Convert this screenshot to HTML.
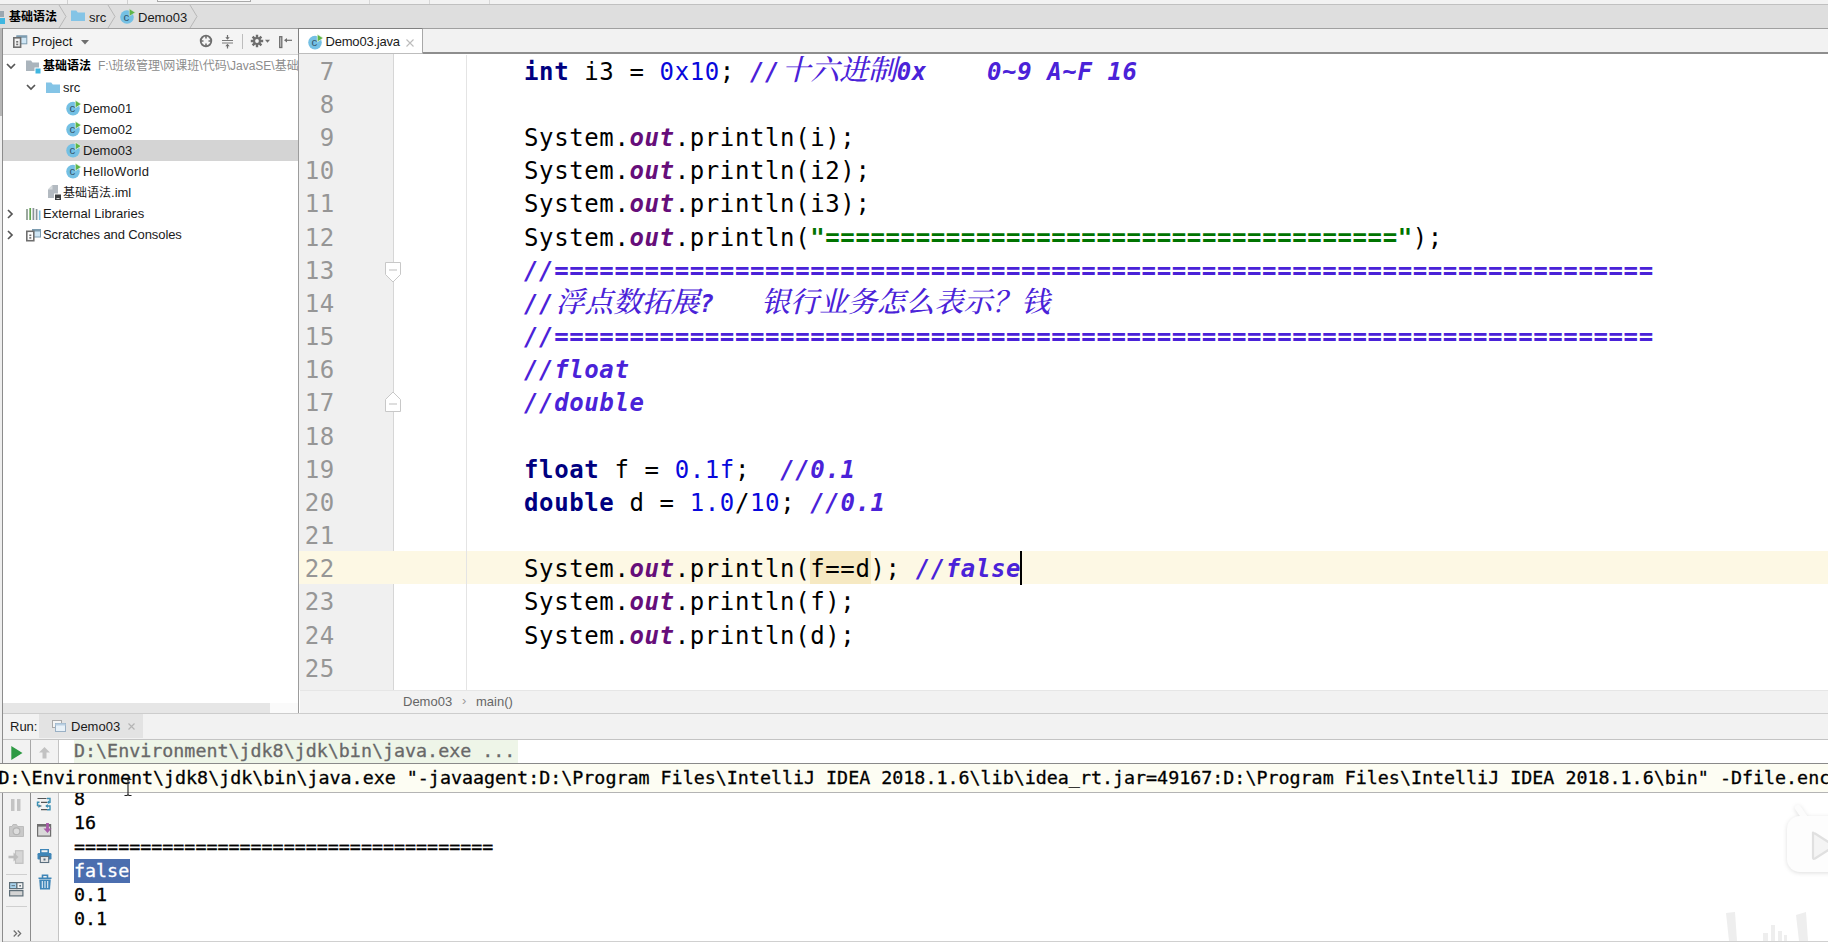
<!DOCTYPE html><html><head><meta charset="utf-8"><title>Demo03</title><style>html,body{margin:0;padding:0;}
body{width:1828px;height:942px;overflow:hidden;position:relative;background:#fff;font-family:"Liberation Sans","Noto Sans CJK SC",sans-serif;font-size:13px;color:#1a1a1a;}
div,span{box-sizing:border-box;}
.abs{position:absolute;}
#topstrip{position:absolute;left:0;top:0;width:1828px;height:4px;background:#f2f2f2;}
#navbar{position:absolute;left:0;top:4px;width:1828px;height:25px;background:#dedede;border-top:1px solid #c0c0c0;border-bottom:1px solid #a0a0a0;}
#leftedge{position:absolute;left:0;top:28px;width:3px;height:914px;background:#eeeeee;border-right:1px solid #8c8c8c;}
#leftedge div{position:absolute;left:0;top:0;width:2px;height:88px;background:#b6b6b6;}
#projhead{position:absolute;left:3px;top:29px;width:295px;height:26px;background:#f4f4f4;border-bottom:1px solid #d4d4d4;}
#tree{position:absolute;left:3px;top:55px;width:295px;height:648px;background:#fff;overflow:hidden;}
#treescroll{position:absolute;left:3px;top:703px;width:295px;height:10px;background:#fafafa;}
#treescroll div{position:absolute;left:0;top:0;width:267px;height:10px;background:#e6e6e6;}
#vdiv{position:absolute;left:298px;top:29px;width:1px;height:684px;background:#9c9c9c;}
#tabs{position:absolute;left:298px;top:29px;width:1530px;height:25px;background:#f2f2f2;border-bottom:2px solid #8e8e8e;}
#tab1{position:absolute;left:0;top:-1px;width:125px;height:26px;background:#fff;border:1px solid #808080;border-bottom:1px solid #bdbdbd;border-right-color:#a8a8a8;}
.row{position:absolute;left:0;width:295px;height:21px;line-height:21px;white-space:nowrap;}
.row.sel{background:#d4d4d4;}
.row span.t{position:absolute;top:0;}
.cjkb{font-weight:bold;font-size:12px;}
#editor{position:absolute;left:299px;top:54px;width:1529px;height:636px;background:#fff;overflow:hidden;}
#gutter{position:absolute;left:0;top:0;width:94.5px;height:636px;background:#f0f0f0;border-right:1.5px solid #d6d6d6;}
#guide{position:absolute;left:167px;top:1px;width:1px;height:635px;background:#e4e4e4;}
#curline{position:absolute;left:0;width:1529px;height:33px;background:#fdf8e4;}
.ln,.cl{position:absolute;height:33.17px;line-height:33.17px;white-space:pre;font-family:"DejaVu Sans Mono","Liberation Mono","Noto Serif CJK SC",monospace;font-size:24px;letter-spacing:0.614px;}
.ln{left:0;width:35.8px;text-align:right;color:#969696;margin-top:-51.7px;}
.cl{left:225px;color:#000;margin-top:-51.7px;}
#curline,#hl,#caret{margin-top:-53.500px;}
#hl{position:absolute;left:511px;width:60.500px;height:33px;background:#f6e9c2;}
#caret{position:absolute;left:721.300px;width:2px;height:33.500px;background:#000;}
.k{color:#000080;font-weight:bold;}
.n{color:#0808dc;}
.s{color:#660e7a;font-weight:bold;font-style:italic;}
.g{color:#007400;font-weight:bold;}
.c{color:#4a22d8;font-weight:bold;font-style:italic;}
.z{font-family:"Noto Serif CJK SC",serif;font-size:28.75px;font-weight:500;line-height:10px;position:relative;top:0.5px;margin-left:1.5px;letter-spacing:0;}
.z2{margin-left:1.5px;letter-spacing:0.15px;}
.hl{background:#fcefc0;}
.caret{display:inline-block;width:2px;height:31px;background:#000;vertical-align:middle;margin-left:0px;margin-top:-3px;}
#edcrumb{position:absolute;left:300px;top:690px;width:1528px;height:23px;background:#f2f2f2;border-top:1px solid #e6e6e6;color:#666;font-size:13px;line-height:22px;}
#runhead{position:absolute;left:3px;top:713px;width:1825px;height:26px;background:#f2f2f2;border-top:1px solid #cdcdcd;}
#runtab{position:absolute;left:36px;top:0;width:104px;height:24px;background:#e3e3e3;}
#console{position:absolute;left:3px;top:739px;width:1825px;height:203px;background:#fff;}
.con{position:absolute;left:71px;height:24px;line-height:24px;white-space:pre;font-family:"DejaVu Sans Mono","Liberation Mono",monospace;font-size:18.34px;color:#000;-webkit-text-stroke:0.3px;}
#tooltip{position:absolute;left:0;top:763px;width:1828px;height:30px;background:#fdfdf3;border-top:1px solid #8a8a8a;border-bottom:1px solid #b4b4b4;white-space:pre;font-family:"DejaVu Sans Mono","Liberation Mono",monospace;font-size:18.34px;line-height:27px;color:#000;overflow:hidden;text-indent:-1.5px;-webkit-text-stroke:0.3px;}
svg{position:absolute;overflow:visible;}
</style></head><body>
<div id="topstrip">
 <div class="abs" style="left:67px;top:0;width:1px;height:4px;background:#d0d0d0"></div>
 <div class="abs" style="left:127px;top:0;width:1px;height:4px;background:#d0d0d0"></div>
 <div class="abs" style="left:157px;top:0;width:94px;height:2px;background:#fafafa;border:1px solid #a9a9a9;border-top:none"></div>
 <div class="abs" style="left:369px;top:0;width:1px;height:4px;background:#d8d8d8"></div>
 <div class="abs" style="left:429px;top:0;width:1px;height:4px;background:#d8d8d8"></div>
 <div class="abs" style="left:489px;top:0;width:1px;height:4px;background:#d8d8d8"></div>
</div>
<div id="navbar">
 <svg style="left:0;top:6px" width="6" height="14"><rect x="0" y="0" width="4" height="6" fill="#9aa7b0"/><rect x="0" y="7" width="5" height="6" fill="#40b6e0"/></svg>
 <span class="abs cjkb" style="left:9px;top:0;line-height:25px;color:#000">基础语法</span>
 <svg style="left:58px;top:0" width="12" height="23"><path d="M1 0 L8 11.5 L1 23" fill="none" stroke="#b8b8b8" stroke-width="1"/></svg>
 <svg style="left:71px;top:5px" width="15" height="12"><path d="M0 0.5h5.2l1.6 2H14V11H0z" fill="#84c4e6"/></svg>
 <span class="abs" style="left:89px;top:0;line-height:25px;color:#1a1a1a">src</span>
 <svg style="left:107px;top:0" width="12" height="23"><path d="M1 0 L8 11.5 L1 23" fill="none" stroke="#b8b8b8" stroke-width="1"/></svg>
 <svg style="left:120px;top:4px" width="16" height="16"><circle cx="7" cy="8" r="6.8" fill="#74c0e4"/><path d="M9.300 -0.300 L15.300 3.500 L9.300 7.300z" fill="#5fb548" stroke="#dedede" stroke-width="0.600"/><text x="3.500" y="11.800" font-family="Liberation Sans,sans-serif" font-size="11.500" fill="#36566b">c</text></svg>
 <span class="abs" style="left:138px;top:0;line-height:25px;color:#1a1a1a">Demo03</span>
 <svg style="left:189px;top:0" width="12" height="23"><path d="M1 0 L8 11.5 L1 23" fill="none" stroke="#b8b8b8" stroke-width="1"/></svg>
</div>
<div id="leftedge"><div></div></div>
<div id="projhead">
 <svg style="left:10px;top:5px" width="16" height="14"><rect x="3.800" y="1.800" width="10" height="8" fill="#cfe6f5" stroke="#7d9cb0" stroke-width="1"/><rect x="3.800" y="1.800" width="10" height="2" fill="#7d9cb0"/><rect x="0.800" y="3.800" width="6.800" height="9.400" fill="#f2f2f2" stroke="#6e6e6e" stroke-width="1.600"/><rect x="3.200" y="7" width="2" height="1.600" fill="#6e6e6e"/><rect x="3.200" y="9.600" width="2" height="1.600" fill="#6e6e6e"/></svg>
 <span class="abs" style="left:29px;top:0;line-height:25px;color:#1a1a1a">Project</span>
 <svg style="left:78px;top:11px" width="9" height="5"><path d="M0 0h8L4 4.5z" fill="#6e6e6e"/></svg>
 <svg style="left:196px;top:5.300px" width="14" height="14"><circle cx="7" cy="7" r="5.300" fill="none" stroke="#6e6e6e" stroke-width="1.800"/><path d="M7 1v3.500M7 9.500v3.500M1 7h3.500M9.500 7h3.500" stroke="#6e6e6e" stroke-width="1.600"/></svg>
 <svg style="left:219px;top:5.500px" width="11" height="13"><path d="M0 5.500h11M0 8h11" stroke="#6e6e6e" stroke-width="0.900"/><path d="M5.500 0v3M5.500 10.500v3" stroke="#6e6e6e" stroke-width="1.200"/><path d="M3.300 2.200h4.400L5.500 4.800zM3.300 11.300h4.400L5.500 8.700z" fill="#6e6e6e"/></svg>
 <div class="abs" style="left:239px;top:5px;width:1px;height:15px;background:#bdbdbd"></div>
 <svg style="left:247px;top:5.300px" width="22" height="15"><g stroke="#6e6e6e" stroke-width="2.400"><path d="M7 0.800v12.400M0.800 7h12.400M2.600 2.600l8.800 8.800M11.400 2.600l-8.800 8.800"/></g><circle cx="7" cy="7" r="3.900" fill="#6e6e6e"/><circle cx="7" cy="7" r="1.900" fill="#f6f6f6"/><path d="M15 5.800h5l-2.500 3z" fill="#6e6e6e"/></svg>
 <svg style="left:275.500px;top:6.500px" width="14" height="12"><rect x="0.700" y="0.700" width="2.100" height="10.800" fill="#ddd" stroke="#6e6e6e" stroke-width="1.300"/><path d="M6.500 4.300h6.500" stroke="#6e6e6e" stroke-width="1.200"/><path d="M5 4.300l3-2.300v4.600z" fill="#6e6e6e"/></svg>
</div>
<div id="vdiv"></div>
<div id="tabs">
 <div id="tab1">
  <svg style="left:9px;top:5px" width="16" height="16"><circle cx="7" cy="8.6" r="6.8" fill="#74c0e4"/><path d="M9.3 0.300 L15.300 4.100 L9.300 7.900z" fill="#5fb548" stroke="#fff" stroke-width="0.600"/><text x="3.500" y="12.400" font-family="Liberation Sans,sans-serif" font-size="11.500" fill="#36566b">c</text></svg>
  <span class="abs" style="left:26.500px;top:0;line-height:26px;color:#1a1a1a;letter-spacing:-0.2px">Demo03.java</span>
  <svg style="left:107px;top:9.500px" width="8" height="8"><path d="M0.5 0.5l7 7M7.5 0.5l-7 7" stroke="#bcbcbc" stroke-width="1.1"/></svg>
 </div>
</div>

<div id="tree">
 <div class="row" style="top:1px">
  <svg style="left:3px;top:7px" width="10" height="7"><path d="M1 1l4 4 4-4" fill="none" stroke="#555" stroke-width="1.700"/></svg>
  <svg style="left:23px;top:4px" width="16" height="14"><path d="M0 0.5h5l1.5 2H13V11H0z" fill="#aab4bc"/><rect x="9" y="8" width="6" height="6" fill="#40b6e0" stroke="#fff" stroke-width="1"/></svg>
  <span class="t cjkb" style="left:40px;color:#000">基础语法</span>
  <span class="t" style="left:95px;color:#8c8c8c;font-size:12px">F:\班级管理\网课班\代码\JavaSE\基础语法</span>
 </div>
 <div class="row" style="top:22px">
  <svg style="left:23px;top:7px" width="10" height="7"><path d="M1 1l4 4 4-4" fill="none" stroke="#555" stroke-width="1.700"/></svg>
  <svg style="left:43px;top:5px" width="15" height="12"><path d="M0 0.5h5.2l1.6 2H14V11H0z" fill="#84c4e6"/></svg>
  <span class="t" style="left:60px">src</span>
 </div>
 <div class="row" style="top:43px">
  <svg style="left:63px;top:2px" width="16" height="16"><circle cx="7" cy="8.6" r="6.8" fill="#74c0e4"/><path d="M9.3 0.300 L15.300 4.100 L9.300 7.900z" fill="#5fb548" stroke="#fff" stroke-width="0.600"/><text x="3.500" y="12.400" font-family="Liberation Sans,sans-serif" font-size="11.500" fill="#36566b">c</text></svg>
  <span class="t" style="left:80px">Demo01</span>
 </div>
 <div class="row" style="top:64px">
  <svg style="left:63px;top:2px" width="16" height="16"><circle cx="7" cy="8.6" r="6.8" fill="#74c0e4"/><path d="M9.3 0.300 L15.300 4.100 L9.300 7.900z" fill="#5fb548" stroke="#fff" stroke-width="0.600"/><text x="3.500" y="12.400" font-family="Liberation Sans,sans-serif" font-size="11.500" fill="#36566b">c</text></svg>
  <span class="t" style="left:80px">Demo02</span>
 </div>
 <div class="row sel" style="top:85px">
  <svg style="left:63px;top:2px" width="16" height="16"><circle cx="7" cy="8.6" r="6.8" fill="#74c0e4"/><path d="M9.3 0.300 L15.300 4.100 L9.300 7.900z" fill="#5fb548" stroke="#fff" stroke-width="0.600"/><text x="3.500" y="12.400" font-family="Liberation Sans,sans-serif" font-size="11.500" fill="#36566b">c</text></svg>
  <span class="t" style="left:80px">Demo03</span>
 </div>
 <div class="row" style="top:106px">
  <svg style="left:63px;top:2px" width="16" height="16"><circle cx="7" cy="8.6" r="6.8" fill="#74c0e4"/><path d="M9.3 0.300 L15.300 4.100 L9.300 7.900z" fill="#5fb548" stroke="#fff" stroke-width="0.600"/><text x="3.500" y="12.400" font-family="Liberation Sans,sans-serif" font-size="11.500" fill="#36566b">c</text></svg>
  <span class="t" style="left:80px;letter-spacing:0.3px">HelloWorld</span>
 </div>
 <div class="row" style="top:127px">
  <svg style="left:45px;top:3px" width="14" height="16"><path d="M0 4.500L4.500 0H10v13H0z" fill="#b3bac1"/><path d="M0 4.500L4.500 0v4.500z" fill="#d6dadd"/><rect x="6.500" y="9" width="7" height="6.500" fill="#3c3f41" stroke="#fff" stroke-width="1"/><path d="M8.500 13.500h3" stroke="#d0d0d0" stroke-width="1"/></svg>
  <span class="t" style="left:60px;font-size:12px">基础语法<span style="font-size:13px">.iml</span></span>
 </div>
 <div class="row" style="top:148px">
  <svg style="left:4px;top:6px" width="7" height="10"><path d="M1 1l4 4-4 4" fill="none" stroke="#555" stroke-width="1.700"/></svg>
  <svg style="left:23px;top:5px" width="15" height="13"><path d="M1 1v11" stroke="#8a9a8e" stroke-width="1.700"/><path d="M4.200 0v12" stroke="#62a552" stroke-width="1.700"/><path d="M7.400 0v12M10.600 1v11" stroke="#8a9399" stroke-width="1.700"/><path d="M13.700 2.500v9.500" stroke="#7fbfe0" stroke-width="1.700"/></svg>
  <span class="t" style="left:40px">External Libraries</span>
 </div>
 <div class="row" style="top:169px">
  <svg style="left:4px;top:6px" width="7" height="10"><path d="M1 1l4 4-4 4" fill="none" stroke="#555" stroke-width="1.700"/></svg>
  <svg style="left:23px;top:4px" width="16" height="14"><rect x="6.500" y="1.500" width="8" height="7.500" fill="#cfe6f5" stroke="#7d9cb0" stroke-width="1"/><rect x="6.500" y="1.500" width="8" height="2" fill="#7d9cb0"/><rect x="0.800" y="3.300" width="7" height="9.400" fill="#fff" stroke="#6e6e6e" stroke-width="1.600"/><rect x="3.300" y="6.500" width="2" height="1.600" fill="#6e6e6e"/><rect x="3.300" y="9.100" width="2" height="1.600" fill="#6e6e6e"/></svg>
  <span class="t" style="left:40px;letter-spacing:-0.1px">Scratches and Consoles</span>
 </div>
</div>
<div id="treescroll"><div></div></div>

<div id="editor">
<div id="gutter"></div>
<div id="curline" style="top:550.96px"></div>
<div id="hl" style="top:550.96px"></div>
<div id="caret" style="top:550.96px"></div>
<div id="guide"></div>
<div class="ln" style="top:53.41px">7</div>
<div class="cl" style="top:53.41px"><b class="k">int</b> i3 = <span class="n">0x10</span>; <span class="c">//<span class="z">十六进制</span>0x    0~9 A~F 16</span></div>
<div class="ln" style="top:86.59px">8</div>
<div class="ln" style="top:119.75px">9</div>
<div class="cl" style="top:119.75px">System.<span class="s">out</span>.println(i);</div>
<div class="ln" style="top:152.92px">10</div>
<div class="cl" style="top:152.92px">System.<span class="s">out</span>.println(i2);</div>
<div class="ln" style="top:186.09px">11</div>
<div class="cl" style="top:186.09px">System.<span class="s">out</span>.println(i3);</div>
<div class="ln" style="top:219.27px">12</div>
<div class="cl" style="top:219.27px">System.<span class="s">out</span>.println(<span class="g">"======================================"</span>);</div>
<div class="ln" style="top:252.43px">13</div>
<div class="cl" style="top:252.43px"><span class="c">//=========================================================================</span></div>
<div class="ln" style="top:285.61px">14</div>
<div class="cl" style="top:285.61px"><span class="c">//<span class="z">浮点数拓展</span>?   <span class="z z2">银行业务怎么表示？钱</span></span></div>
<div class="ln" style="top:318.78px">15</div>
<div class="cl" style="top:318.78px"><span class="c">//=========================================================================</span></div>
<div class="ln" style="top:351.95px">16</div>
<div class="cl" style="top:351.95px"><span class="c">//float</span></div>
<div class="ln" style="top:385.12px">17</div>
<div class="cl" style="top:385.12px"><span class="c">//double</span></div>
<div class="ln" style="top:418.29px">18</div>
<div class="ln" style="top:451.46px">19</div>
<div class="cl" style="top:451.46px"><b class="k">float</b> f = <span class="n">0.1f</span>;  <span class="c">//0.1</span></div>
<div class="ln" style="top:484.63px">20</div>
<div class="cl" style="top:484.63px"><b class="k">double</b> d = <span class="n">1.0</span>/<span class="n">10</span>; <span class="c">//0.1</span></div>
<div class="ln" style="top:517.79px">21</div>
<div class="ln" style="top:550.96px">22</div>
<div class="cl" style="top:550.96px">System.<span class="s">out</span>.println(f==d); <span class="c">//false</span></div>
<div class="ln" style="top:584.13px">23</div>
<div class="cl" style="top:584.13px">System.<span class="s">out</span>.println(f);</div>
<div class="ln" style="top:617.30px">24</div>
<div class="cl" style="top:617.30px">System.<span class="s">out</span>.println(d);</div>
<div class="ln" style="top:650.48px">25</div>
<svg style="left:85px;top:208px" width="18" height="21"><path d="M1.500 0.500h15v12L9 20 1.500 12.500z" fill="#fff" stroke="#c8c8c8" stroke-width="1"/><path d="M5 8h8" stroke="#bdbdbd" stroke-width="1"/></svg>
<svg style="left:85px;top:337px" width="18" height="21"><path d="M1.500 20.500h15v-12L9 1 1.500 8.500z" fill="#fff" stroke="#c8c8c8" stroke-width="1"/><path d="M5 13h8" stroke="#bdbdbd" stroke-width="1"/></svg>

</div>
<div id="edcrumb"><span class="abs" style="left:103px;top:0">Demo03</span><span class="abs" style="left:162px;top:-1px;color:#9a9a9a">›</span><span class="abs" style="left:176px;top:0">main()</span></div>
<div id="runhead">
 <span class="abs" style="left:7px;top:1px;line-height:24px;color:#1a1a1a">Run:</span>
 <div id="runtab">
  <svg style="left:13px;top:6px" width="15" height="13"><rect x="0.5" y="0.5" width="9" height="7" fill="#f4f4f4" stroke="#a8a8a8"/><rect x="3.5" y="3.5" width="10" height="8" fill="#e8f1f8" stroke="#9ab0c4"/><rect x="3.5" y="3.5" width="10" height="2" fill="#b9cfe2"/></svg>
  <span class="abs" style="left:32px;top:1px;line-height:24px;color:#1a1a1a">Demo03</span>
  <svg style="left:89px;top:9px" width="7" height="7"><path d="M0.5 0.5l6 6M6.5 0.5l-6 6" stroke="#b4b4b4" stroke-width="1.2"/></svg>
 </div>
</div>
<div id="console">
 <div class="abs" style="left:0;top:0;width:55px;height:203px;background:#f2f2f2"></div>
 <div class="abs" style="left:27px;top:0;width:1px;height:24px;background:#a8a8a8"></div>
 <div class="abs" style="left:27px;top:52px;width:1px;height:151px;background:#8c8c8c"></div>
 <div class="abs" style="left:55px;top:0;width:1px;height:203px;background:#c4c4c4"></div>
 <svg style="left:8px;top:7px" width="12" height="14"><path d="M0.300 0L11.500 7 0.300 14z" fill="#2e9a44"/></svg>
 <svg style="left:35.500px;top:7.500px" width="12" height="12"><path d="M5.500 0L11 5.500H7.500V11.500H3.500V5.500H0z" fill="#c2c2c2"/></svg>
 <div class="con" style="top:0;color:#686868;background:#eef5e8;padding-right:3px">D:\Environment\jdk8\jdk\bin\java.exe ...</div>
 <div class="con" style="top:48px">8</div>
 <div class="con" style="top:72px">16</div>
 <div class="con" style="top:96px">======================================</div>
 <div class="con" style="top:120px;color:#fff;background:#4b6eaf;padding-right:1px">false</div>
 <div class="con" style="top:144px">0.1</div>
 <div class="con" style="top:168px">0.1</div>
 <div class="abs" style="left:0;top:0;width:1825px;height:1px;background:#c4c4c4"></div>
 <!-- left toolbar icons -->
 <svg style="left:8px;top:60px" width="10" height="12"><rect x="0" y="0" width="3.500" height="12" fill="#c4c4c4"/><rect x="6" y="0" width="3.500" height="12" fill="#c4c4c4"/></svg>
 <svg style="left:34px;top:57.500px" width="15" height="15"><path d="M0.500 1.500h9M4 5.300h6M0.500 9h4M4 12.700h6" stroke="#555" stroke-width="1.200"/><path d="M10 1.500h3v3.800h-1.500M2.500 5.300h-2v3.700M10 12.700h3v-3.700h-3.500" fill="none" stroke="#3b8fb3" stroke-width="1.400"/><path d="M12.300 3.300l-2.500 2 2.500 2zM1.500 7l2.500 2-2.500 2zM10.800 7l-2.600 2 2.600 2z" fill="#3b8fb3"/></svg>
 <svg style="left:6px;top:85px" width="15" height="13"><path d="M0.500 2.500h2.500l1-2h3.500l1 2H14.500v10H0.500z" fill="#c9c9c9" stroke="#bcbcbc"/><circle cx="7.500" cy="7.300" r="3.400" fill="#dedede" stroke="#b4b4b4" stroke-width="1.200"/></svg>
 <svg style="left:34px;top:84px" width="16" height="14"><rect x="0.600" y="1.600" width="13" height="11.500" fill="#d9d9d9" stroke="#6e6e6e" stroke-width="1.200"/><rect x="0.600" y="1.600" width="13" height="2" fill="#6e6e6e"/><path d="M10.500 0v7" stroke="#a85aa8" stroke-width="2.800"/><path d="M6.500 5.500h8l-4 4.500z" fill="#a85aa8"/></svg>
 <svg style="left:5px;top:111px" width="16" height="14"><rect x="7.500" y="0.700" width="7.500" height="12.600" fill="#d6d6d6" stroke="#c0c0c0" stroke-width="1.200"/><path d="M0.500 7h6" stroke="#bdbdbd" stroke-width="2.600"/><path d="M5.500 2.500l5 4.500-5 4.500z" fill="#bdbdbd"/></svg>
 <svg style="left:34px;top:110px" width="15" height="14"><rect x="3" y="0" width="9" height="4" fill="#3f86b8"/><rect x="4.500" y="1.200" width="6" height="2" fill="#f2f2f2"/><rect x="0.500" y="4" width="14" height="6.500" rx="1.200" fill="#3f86b8"/><rect x="3.300" y="7.500" width="8.400" height="6" fill="#e8e8e8" stroke="#5a6e7e" stroke-width="1.100"/><rect x="6.500" y="9.500" width="2" height="2" fill="#5a6e7e"/></svg>
 <div class="abs" style="left:3px;top:135px;width:21px;height:1px;background:#cfcfcf"></div>
 <svg style="left:6px;top:143px" width="15" height="15"><rect x="0.600" y="0.600" width="7.300" height="6" fill="#a9d4ee" stroke="#5e6e78" stroke-width="1.200"/><rect x="7.900" y="0.600" width="6" height="6" fill="#f4f4f4" stroke="#5e6e78" stroke-width="1.200"/><rect x="10.300" y="3" width="1.600" height="1.600" fill="#5e6e78"/><path d="M2.500 3.700h3.500" stroke="#5e6e78" stroke-width="1"/><rect x="0.600" y="8.600" width="13.300" height="5.300" fill="#d4d4d4" stroke="#5e6e78" stroke-width="1.200"/></svg>
 <svg style="left:35px;top:135px" width="14" height="16"><path d="M0.500 4.200h13M4.500 4V1.200h5V4" stroke="#3f86b8" stroke-width="1.600" fill="none"/><path d="M1.200 5.500h11.600l-0.800 10h-10z" fill="#3f86b8"/><path d="M4.300 7v7M7 7v7M9.700 7v7" stroke="#e6f0f8" stroke-width="1.100"/></svg>
 <div class="abs" style="left:3px;top:167px;width:21px;height:1px;background:#cfcfcf"></div>
 <svg style="left:10px;top:191px" width="9" height="7"><path d="M0.700 0.500l3 3-3 3M4.700 0.500l3 3-3 3" fill="none" stroke="#6e6e6e" stroke-width="1.200"/></svg>
 <!-- watermark -->
 <svg style="left:1783px;top:66px;filter:drop-shadow(0 1px 2px rgba(0,0,0,0.13))" width="42" height="72"><path d="M12 3l7 10" stroke="#fcfcfc" stroke-width="6" stroke-linecap="round"/><rect x="1" y="11" width="70" height="56" rx="13" fill="#fdfdfd"/><path d="M27 27.500l0 25q0 2 2 1l18-11.500q1.500-1 0-2l-18-11.500q-2-1-2 1z" fill="#f4f4f4" stroke="#e0e0e0" stroke-width="2.200" stroke-linejoin="round"/></svg>
 <svg style="left:1720px;top:170px" width="100" height="32"><g fill="#eeeeee"><path d="M3 4l9 -1 2 29-8 0z"/><path d="M40 24h5v8h-5zM48 16h4v16h-4zM55 22h4v10h-4zM61 26h3v6h-3z"/><path d="M73 6l10-3 2 29-9 0z"/></g></svg>
 
 <div class="abs" style="left:0;top:202px;width:1825px;height:1px;background:#d0d0d0"></div>
</div>
<div id="tooltip">D:\Environment\jdk8\jdk\bin\java.exe "-javaagent:D:\Program Files\IntelliJ IDEA 2018.1.6\lib\idea_rt.jar=49167:D:\Program Files\IntelliJ IDEA 2018.1.6\bin" -Dfile.encoding=UTF-8</div>
<svg style="left:124px;top:779px" width="8" height="17"><path d="M0.500 0.500h2.500l1 1 1-1h2.500M4 1.500v14M0.500 16.500h2.500l1-1 1 1h2.500" fill="none" stroke="#222" stroke-width="1.100"/></svg>

</body></html>
